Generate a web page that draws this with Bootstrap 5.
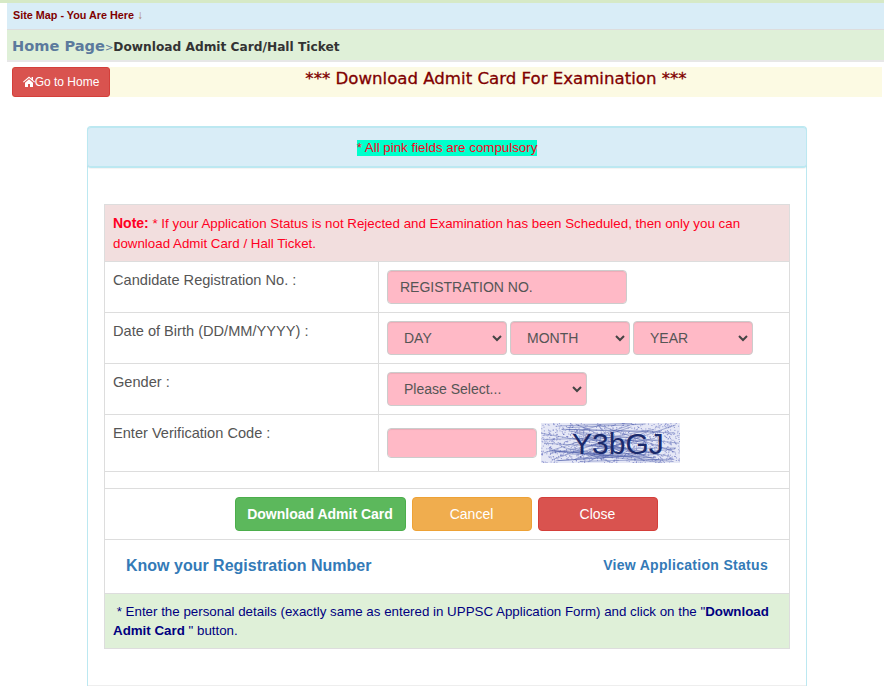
<!DOCTYPE html>
<html lang="en">
<head>
    <meta charset="UTF-8">
    <meta name="viewport" content="width=device-width, initial-scale=1.0">
    <title>Download Admit Card</title>
    <link rel="stylesheet" href="https://cdn.jsdelivr.net/npm/bootstrap@5.3.2/dist/css/bootstrap.min.css">
    <style>
        body { font-family: "Liberation Sans", Arial, sans-serif; font-size: 14px; color: #555; padding-left: 7px; padding-top: 3px; position: relative; overflow: hidden; height: 687px; }
        .top-strip { position: absolute; left: 0; right: 0; top: 0; height: 3px; background: #d6e9c6; }
        .site-map { height: 27px; background: #d9edf7; border-bottom: 1px solid #ddd; padding: 5px 0 0 6px; font-size: 10.8px; font-weight: 700; color: #800000; line-height: 14px; }
        .site-map span { color: #b08060; font-weight: 400; font-size: 12px; }
        .crumb { height: 32px; background: #dff0d8; border-bottom: 2px solid #e7e7e7; padding-left: 5px; line-height: 31px; font-family: "DejaVu Sans", Verdana, sans-serif; font-size: 12.2px; font-weight: 700; color: #333; white-space: nowrap; }
        .crumb a { color: #5b7a9d; font-size: 14.6px; text-decoration: none; }
        .crumb i { color: #5b7a9d; font-style: normal; font-weight: 400; font-size: 10px; }
        .title-row { margin: 5px 2px 0 5px; height: 30px; background: #fcfae3; display: flex; }
        .btn-home { width: 98px; height: 30px; padding: 0; background: #d9534f; border: 1px solid #d43f3a; border-radius: 3px; color: #fff; font-size: 12px; line-height: 28px; flex: none; white-space: nowrap; }
        .btn-home svg { vertical-align: -1px; }
        .page-title { flex: 1; text-align: center; font-family: "DejaVu Sans", Verdana, sans-serif; font-size: 16.6px; color: #800000; line-height: 24px; -webkit-text-stroke: 0.3px #800000; }
        .form-panel { margin: 29px 0 0 80px; width: 720px; height: 560px; border: 1px solid #bce8f1; border-bottom: 0; border-radius: 4px 4px 0 0; }
        .panel-head { height: 41px; margin: 0 -1px 0 -1px; background: #d9edf7; border: 1px solid #bce8f1; border-radius: 4px; border-bottom-width: 2px; box-shadow: 0 1px 1px rgba(0,0,0,.05); text-align: center; padding-top: 11px; line-height: 16px; }
        .panel-head span { background: #00ffcc; color: #ff0022; font-size: 13.33px; display: inline-block; }
        .form-tbl { margin: 36px 0 0 16px; width: 686px; border-collapse: collapse; table-layout: fixed; }
        .form-tbl td { border: 1px solid #ddd; padding: 8px; vertical-align: top; }
        .form-tbl td.note-cell { padding: 9px 8px 7px; }
        .col-lbl { width: 274px; }
        .note-cell { background: #f2dede; color: #ff0022; font-size: 13.33px; line-height: 20px; }
        .note-cell b { font-size: 14px; line-height: 1; }
        .lbl { font-size: 14.6px; color: #555; line-height: 20px; }
        .fld { height: 34px; background-color: #ffb9c6; border: 1px solid #ccc; border-radius: 4px; color: #555; font-size: 14px; box-shadow: inset 0 1px 1px rgba(0,0,0,.075); }
        .fld::placeholder { color: #555; opacity: 1; }
        .fld.form-control { padding: 6px 12px; }
        .fld.form-select { padding: 6px 24px 6px 16px; background-image: url("data:image/svg+xml,%3csvg xmlns='http://www.w3.org/2000/svg' viewBox='0 0 10 7'%3e%3cpath fill='none' stroke='%23444' stroke-width='2' d='M1 1l4 4 4-4'/%3e%3c/svg%3e"); background-position: right 4px center; background-size: 10px 7px; }
        .fld:focus { background-color: #ffb9c6; }
        .gap-3px { gap: 3px; }
        .w-reg { width: 240px; }
        .w-date { width: 120px; }
        .w-gender { width: 200px; }
        .w-code { width: 150px; height: 30px; margin-top: 5px; }
        .captcha { display: block; margin-left: 4px; }
        .captcha text { font-family: "Liberation Sans", Arial, sans-serif; font-size: 30px; fill: #1a2a6c; }
        .btn-act { height: 34px; color: #fff; font-size: 14px; padding: 0; border-radius: 4px; }
        .act-green { width: 171px; background: #5cb85c; border: 1px solid #4cae4c; font-weight: 700; }
        .act-orange { width: 120px; background: #f0ad4e; border: 1px solid #eea236; }
        .act-red { width: 120px; background: #d9534f; border: 1px solid #d43f3a; }
        .gap-act { gap: 6px; padding-right: 2px; }
        .links-row { height: 37px; padding: 0 13px; }
        .link-a, .link-b { color: #337ab7; font-weight: 700; text-decoration: none; margin-bottom: 2px; }
        .link-a { font-size: 16px; }
        .link-b { font-size: 14px; letter-spacing: .3px; }
        .help-cell { background: #dff0d8; color: #000080; font-size: 13.33px; line-height: 19px; }
        .panel-foot { margin-top: 36px; border-top: 1px solid #eee; }
    </style>
</head>
<body>
    <div class="top-strip"></div>

    <div class="site-map">Site Map - You Are Here <span>↓</span></div>
    <div class="crumb"><a href="#">Home Page</a><i>&gt;</i>Download Admit Card/Hall Ticket</div>

    <div class="title-row">
        <button class="btn btn-home" type="button">
            <svg width="12" height="11" viewBox="0 0 12 11"><path fill="#fff" d="M6 0.5 0 5.8l.7.8L6 2l5.3 4.6.7-.8-2-1.8V1H8.6v1.8zM2 6.8V11h3V8h2v3h3V6.8L6 3.2z"/></svg>Go to Home
        </button>
        <div class="page-title">*** Download Admit Card For Examination ***</div>
    </div>

    <div class="form-panel">
        <div class="panel-head"><span>* All pink fields are compulsory</span></div>

        <table class="form-tbl">
            <colgroup><col class="col-lbl"><col></colgroup>
            <tr>
                <td colspan="2" class="note-cell"><b>Note:</b> * If your Application Status is not Rejected and Examination has been Scheduled, then only you can download Admit Card / Hall Ticket.</td>
            </tr>
            <tr>
                <td class="lbl">Candidate Registration No. :</td>
                <td><input class="form-control fld w-reg" type="text" placeholder="REGISTRATION NO."></td>
            </tr>
            <tr>
                <td class="lbl">Date of Birth (DD/MM/YYYY) :</td>
                <td>
                    <div class="d-flex gap-3px">
                        <select class="form-select fld w-date"><option>DAY</option></select>
                        <select class="form-select fld w-date"><option>MONTH</option></select>
                        <select class="form-select fld w-date"><option>YEAR</option></select>
                    </div>
                </td>
            </tr>
            <tr>
                <td class="lbl">Gender :</td>
                <td><select class="form-select fld w-gender"><option>Please Select...</option></select></td>
            </tr>
            <tr>
                <td class="lbl">Enter Verification Code :</td>
                <td>
                    <div class="d-flex">
                        <input class="form-control fld w-code" type="text">
                        <svg class="captcha" id="captcha" width="139" height="40" viewBox="0 0 139 40">
                            <rect width="139" height="40" fill="#e6e8f6"/>
                            <g id="noise"></g>
                            <text x="31" y="31">Y3bGJ</text>
                        </svg>
                    </div>
                </td>
            </tr>
            <tr><td colspan="2" class="spacer-cell"></td></tr>
            <tr>
                <td colspan="2">
                    <div class="d-flex justify-content-center gap-act">
                        <button class="btn btn-act act-green" type="button">Download Admit Card</button>
                        <button class="btn btn-act act-orange" type="button">Cancel</button>
                        <button class="btn btn-act act-red" type="button">Close</button>
                    </div>
                </td>
            </tr>
            <tr>
                <td colspan="2" class="links-cell">
                    <div class="d-flex justify-content-between align-items-center links-row">
                        <a class="link-a" href="#">Know your Registration Number</a>
                        <a class="link-b" href="#">View Application Status</a>
                    </div>
                </td>
            </tr>
            <tr>
                <td colspan="2" class="help-cell">&nbsp;* Enter the personal details (exactly same as entered in UPPSC Application Form) and click on the "<b>Download Admit Card</b> " button.</td>
            </tr>
        </table>
        <div class="panel-foot"></div>
    </div>

    <script>
        // captcha noise, seeded so every render is the same
        var seed = 7;
        function rnd(n) { seed = (seed * 16807) % 2147483647; return (seed % 1000) / 1000 * n; }
        var out = "";
        for (var i = 0; i < 900; i++) {
            out += '<rect x="' + rnd(139).toFixed(1) + '" y="' + rnd(40).toFixed(1) + '" width="1" height="1" fill="#6a74c0" opacity=".7"/>';
        }
        for (var j = 0; j < 45; j++) {
            var x1 = rnd(60), y1 = rnd(40), x2 = 60 + rnd(79), y2 = rnd(40);
            out += '<line x1="' + x1 + '" y1="' + y1 + '" x2="' + x2 + '" y2="' + y2 + '" stroke="#4a5aa8" stroke-width=".6" opacity=".75"/>';
        }
        document.getElementById("noise").innerHTML = out;
    </script>
    <script src="https://cdn.jsdelivr.net/npm/bootstrap@5.3.2/dist/js/bootstrap.bundle.min.js"></script>
</body>
</html>
